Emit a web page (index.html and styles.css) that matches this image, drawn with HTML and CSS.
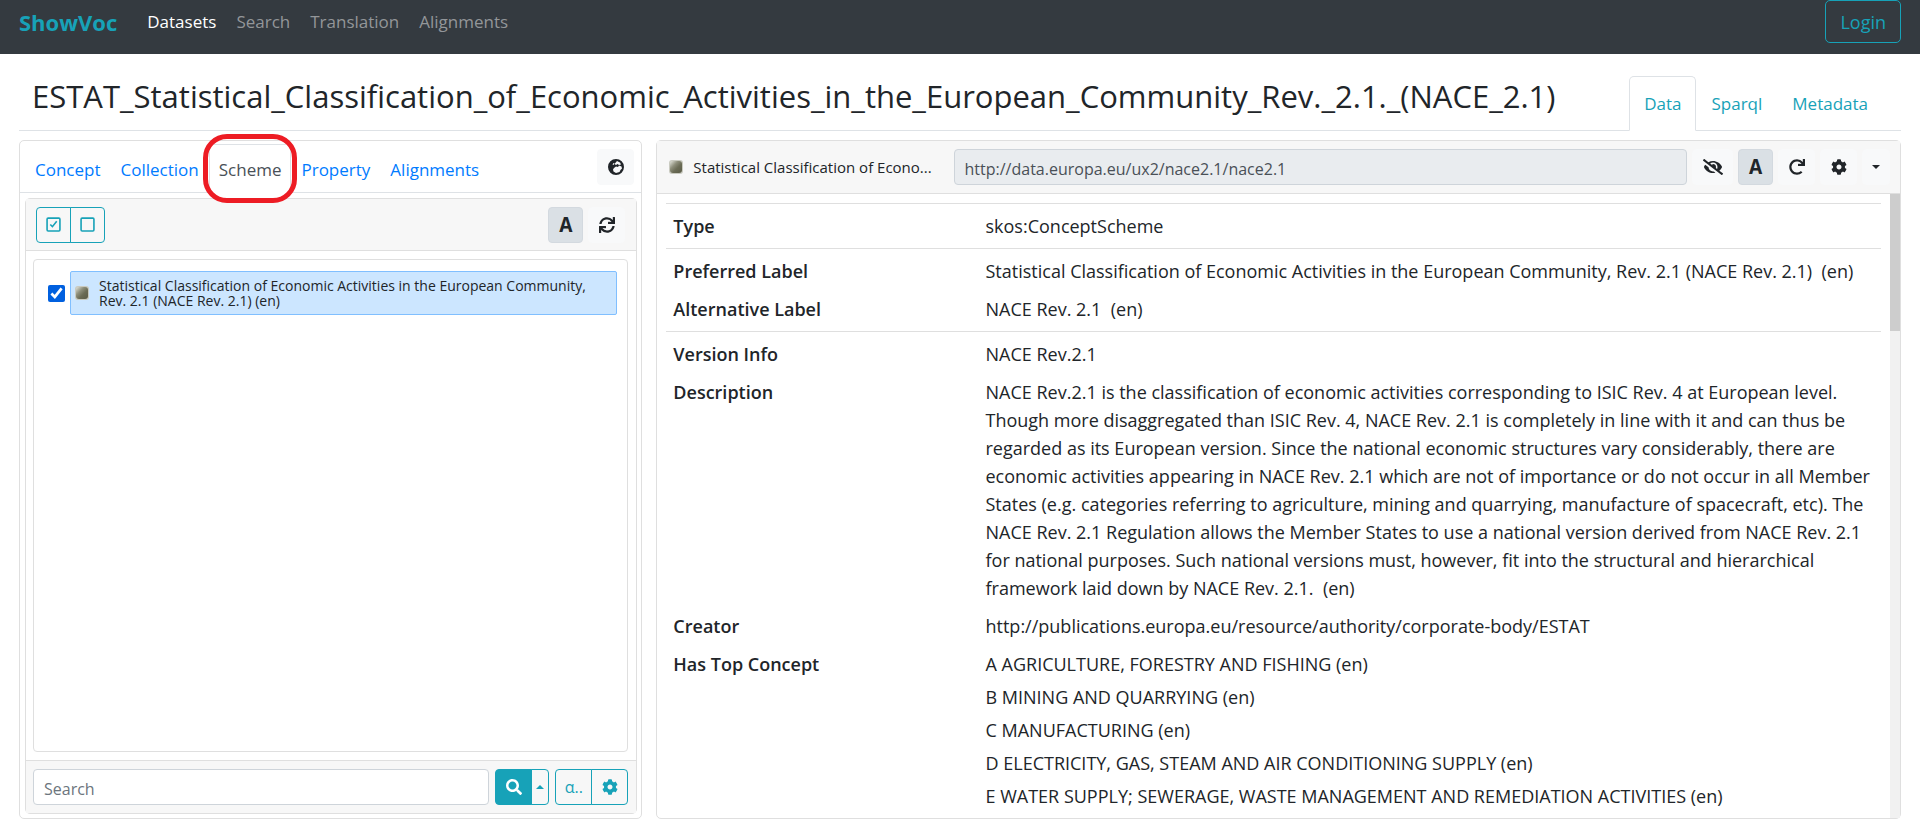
FILE: index.html
```html
<!DOCTYPE html>
<html lang="en">
  <head>
    <meta charset="UTF-8">
    <title>ShowVoc</title>
    <link rel="stylesheet" href="styles.css">
  </head>
  <body>

    <!-- Shared icons -->
    <svg class="icon-defs" aria-hidden="true">
      <linearGradient id="concept-shade" x1="0" y1="0" x2="1" y2="1">
        <stop offset="0" stop-color="#e4e5dc"/>
        <stop offset="0.35" stop-color="#8d8e7b"/>
        <stop offset="0.6" stop-color="#6b6c56"/>
        <stop offset="1" stop-color="#5a5b47"/>
      </linearGradient>
      <symbol id="icon-cog" viewBox="0 0 512 512"><path d="M487.4 315.7l-42.6-24.6c4.3-23.2 4.3-47 0-70.2l42.6-24.6c4.9-2.8 7.1-8.6 5.5-14-11.1-35.6-30-67.8-54.7-94.6-3.8-4.1-10-5.1-14.8-2.3L380.8 110c-17.9-15.4-38.5-27.3-60.8-35.1V25.8c0-5.6-3.9-10.5-9.4-11.7-36.7-8.2-74.3-7.8-109.2 0-5.5 1.2-9.4 6.1-9.4 11.7V75c-22.2 7.9-42.8 19.8-60.8 35.1L88.7 85.5c-4.9-2.8-11-1.9-14.8 2.3-24.7 26.7-43.6 58.9-54.7 94.6-1.7 5.4.6 11.2 5.5 14L67.3 221c-4.3 23.2-4.3 47 0 70.2l-42.6 24.6c-4.9 2.8-7.1 8.6-5.5 14 11.1 35.6 30 67.8 54.7 94.6 3.8 4.1 10 5.1 14.8 2.3l42.6-24.6c17.9 15.4 38.5 27.3 60.8 35.1v49.2c0 5.6 3.9 10.5 9.4 11.7 36.7 8.2 74.3 7.8 109.2 0 5.5-1.2 9.4-6.1 9.4-11.7v-49.2c22.2-7.9 42.8-19.8 60.8-35.1l42.6 24.6c4.9 2.8 11 1.9 14.8-2.3 24.7-26.7 43.6-58.9 54.7-94.6 1.5-5.5-.7-11.3-5.6-14.1zM256 336c-44.1 0-80-35.9-80-80s35.9-80 80-80 80 35.9 80 80-35.9 80-80 80z"/></symbol>
      <symbol id="icon-concept" viewBox="0 0 14 14"><rect width="14" height="14" rx="3" fill="#c9cac0"/><rect x="1" y="1" width="12" height="12" rx="3" fill="url(#concept-shade)"/></symbol>
    </svg>

    <nav class="navbar">
      <a href="#" class="brand">ShowVoc</a>
      <a href="#" class="nav-item active">Datasets</a>
      <a href="#" class="nav-item">Search</a>
      <a href="#" class="nav-item">Translation</a>
      <a href="#" class="nav-item">Alignments</a>
      <button class="login">Login</button>
    </nav>

    <header class="dataset-header">
      <h3>ESTAT_Statistical_Classification_of_Economic_Activities_in_the_European_Community_Rev._2.1._(NACE_2.1)</h3>
      <div class="view-tabs">
        <a href="#" class="active">Data</a>
        <a href="#">Sparql</a>
        <a href="#">Metadata</a>
      </div>
    </header>

    <main class="panels">

      <!-- Structures -->
      <section class="card structures">
        <div class="structure-tabs">
          <a href="#">Concept</a>
          <a href="#">Collection</a>
          <a href="#" class="active">Scheme</a>
          <a href="#">Property</a>
          <a href="#">Alignments</a>
          <button class="btn globe" aria-label="Languages">
            <svg class="icon" viewBox="0 0 16 16"><path fill-rule="evenodd" d="M8 0a8 8 0 1 0 0 16A8 8 0 0 0 8 0zM9 2l3 1.500 1 2-2 .5-1.500-1L8 6 6.500 5zM5.500 4l1 .5-1 1.500-1-.5zM6 9l2-1.500 2 .5 1-1.500 2.500 1 .5 2-1.500 1.500-1 2L8 14l-2.500-1.500L5 10.500z"/></svg>
          </button>
        </div>

        <div class="card scheme-panel">
          <div class="card-header">
            <div class="btn-group">
              <button class="btn outline" aria-label="Check all">
                <svg class="icon-box" viewBox="0 0 14 14"><rect x="1" y="1" width="12" height="12" rx="1"/><path d="M4 7l2 2 4-5"/></svg>
              </button>
              <button class="btn outline" aria-label="Uncheck all">
                <svg class="icon-box" viewBox="0 0 14 14"><rect x="1" y="1" width="12" height="12" rx="1"/></svg>
              </button>
            </div>
            <div class="tools">
              <button class="btn pressed">A</button>
              <button class="btn" aria-label="Refresh">
                <svg class="icon" viewBox="0 0 512 512"><path d="M440.65 12.57l4 82.77A247.16 247.16 0 0 0 255.83 8C134.73 8 33.91 94.92 12.29 209.82A12 12 0 0 0 24.09 224h49.05a12 12 0 0 0 11.67-9.26 175.91 175.91 0 0 1 317-56.94l-101.46-4.86a12 12 0 0 0-12.57 12v47.41a12 12 0 0 0 12 12H500a12 12 0 0 0 12-12V12a12 12 0 0 0-12-12h-47.37a12 12 0 0 0-11.98 12.57zM255.83 432a175.61 175.61 0 0 1-146-77.8l101.8 4.87a12 12 0 0 0 12.57-12v-47.4a12 12 0 0 0-12-12H12a12 12 0 0 0-12 12V500a12 12 0 0 0 12 12h47.35a12 12 0 0 0 12-12.6l-4.15-82.57A247.17 247.17 0 0 0 255.83 504c121.11 0 221.93-86.92 243.55-201.82a12 12 0 0 0-11.8-14.18h-49.05a12 12 0 0 0-11.67 9.26A175.86 175.86 0 0 1 255.83 432z"/></svg>
              </button>
            </div>
          </div>

          <div class="scheme-list">
            <div class="scheme-node">
              <input type="checkbox" id="scheme-nace" checked>
              <label for="scheme-nace">
                <svg class="concept-icon"><use href="#icon-concept"/></svg>
                <span>Statistical Classification of Economic Activities in the European Community, Rev. 2.1 (NACE Rev. 2.1) (en)</span>
              </label>
            </div>
          </div>

          <div class="card-footer">
            <input type="text" class="search-input" placeholder="Search" aria-label="Search">
            <div class="btn-group">
              <button class="btn outline filled" aria-label="Run search">
                <svg class="icon" viewBox="0 0 512 512"><path d="M505 442.7L405.3 343c-4.5-4.5-10.6-7-17-7H372c27.6-35.3 44-79.7 44-128C416 93.1 322.9 0 208 0S0 93.1 0 208s93.1 208 208 208c48.3 0 92.7-16.4 128-44v16.3c0 6.4 2.5 12.5 7 17l99.7 99.7c9.4 9.4 24.6 9.4 33.9 0l28.3-28.3c9.4-9.4 9.4-24.6.1-34zM208 336c-70.7 0-128-57.2-128-128 0-70.7 57.2-128 128-128 70.7 0 128 57.2 128 128 0 70.7-57.2 128-128 128z"/></svg>
              </button>
              <button class="btn outline narrow" aria-label="Search options"><span class="caret up"></span></button>
            </div>
            <div class="btn-group">
              <button class="btn outline">α..</button>
              <button class="btn outline" aria-label="Search settings"><svg class="icon"><use href="#icon-cog"/></svg></button>
            </div>
          </div>
        </div>
      </section>

      <!-- Resource view -->
      <section class="card resource">
        <div class="card-header">
          <div class="resource-name">
            <svg class="concept-icon"><use href="#icon-concept"/></svg>
            <span>Statistical Classification of Econo...</span>
          </div>
          <input type="text" class="resource-uri" value="http://data.europa.eu/ux2/nace2.1/nace2.1" aria-label="Resource URI" readonly>
          <div class="tools">
            <button class="btn wide" aria-label="Hide inferred">
              <svg class="icon-eye" viewBox="0 0 640 512"><path d="M320 400c-75.85 0-137.25-58.71-142.9-133.11L72.2 185.82c-13.79 17.3-26.48 35.59-36.72 55.59a32.35 32.35 0 0 0 0 29.19C89.71 376.41 197.07 448 320 448c26.91 0 52.87-4 77.89-10.46L346 397.39a144.13 144.13 0 0 1-26 2.61zm313.82 58.1l-110.55-85.44a331.25 331.25 0 0 0 81.25-102.07 32.35 32.35 0 0 0 0-29.19C550.29 135.59 442.93 64 320 64a308.15 308.15 0 0 0-147.32 37.7L45.46 3.37A16 16 0 0 0 23 6.18L3.37 31.45A16 16 0 0 0 6.18 53.9l588.36 454.73a16 16 0 0 0 22.46-2.81l19.64-25.27a16 16 0 0 0-2.82-22.45zm-183.72-142l-39.3-30.38A94.75 94.75 0 0 0 416 256a94.76 94.76 0 0 0-121.31-92.21A47.65 47.65 0 0 1 304 192a46.64 46.64 0 0 1-1.54 10l-73.61-56.89A142.31 142.31 0 0 1 320 112a143.92 143.92 0 0 1 144 144c0 21.63-5.29 41.79-13.9 60.11z"/></svg>
            </button>
            <button class="btn pressed">A</button>
            <button class="btn" aria-label="Reload">
              <svg class="icon" viewBox="0 0 512 512"><path d="M500.33 0h-47.41a12 12 0 0 0-12 12.57l4 82.76A247.42 247.42 0 0 0 256 8C119.34 8 7.9 119.53 8 256.19 8.1 393.07 119.1 504 256 504a247.1 247.1 0 0 0 166.18-63.91 12 12 0 0 0 .48-17.43l-34-34a12 12 0 0 0-16.38-.55A176 176 0 1 1 402.1 157.8l-101.53-4.87a12 12 0 0 0-12.57 12v47.41a12 12 0 0 0 12 12h200.33a12 12 0 0 0 12-12V12a12 12 0 0 0-12-12z"/></svg>
            </button>
            <button class="btn" aria-label="Settings"><svg class="icon"><use href="#icon-cog"/></svg></button>
            <button class="btn menu" aria-label="More"><span class="caret"></span></button>
          </div>
        </div>

        <div class="resource-body">
          <div class="properties">
            <dl>
              <div class="row"><dt>Type</dt><dd>skos:ConceptScheme</dd></div>
            </dl>
            <dl>
              <div class="row"><dt>Preferred Label</dt><dd>Statistical Classification of Economic Activities in the European Community, Rev. 2.1 (NACE Rev. 2.1)&nbsp; (en)</dd></div>
              <div class="row"><dt>Alternative Label</dt><dd>NACE Rev. 2.1&nbsp; (en)</dd></div>
            </dl>
            <dl>
              <div class="row"><dt>Version Info</dt><dd>NACE Rev.2.1</dd></div>
              <div class="row">
                <dt>Description</dt>
                <dd>NACE Rev.2.1 is the classification of economic activities corresponding to ISIC Rev. 4 at European level. Though more disaggregated than ISIC Rev. 4, NACE Rev. 2.1 is completely in line with it and can thus be regarded as its European version. Since the national economic structures vary considerably, there are economic activities appearing in NACE Rev. 2.1 which are not of importance or do not occur in all Member States (e.g. categories referring to agriculture, mining and quarrying, manufacture of spacecraft, etc). The NACE Rev. 2.1 Regulation allows the Member States to use a national version derived from NACE Rev. 2.1 for national purposes. Such national versions must, however, fit into the structural and hierarchical framework laid down by NACE Rev. 2.1.&nbsp; (en)</dd>
              </div>
              <div class="row"><dt>Creator</dt><dd>http://publications.europa.eu/resource/authority/corporate-body/ESTAT</dd></div>
              <div class="row">
                <dt>Has Top Concept</dt>
                <dd>A AGRICULTURE, FORESTRY AND FISHING (en)</dd>
                <dd>B MINING AND QUARRYING (en)</dd>
                <dd>C MANUFACTURING (en)</dd>
                <dd>D ELECTRICITY, GAS, STEAM AND AIR CONDITIONING SUPPLY (en)</dd>
                <dd>E WATER SUPPLY; SEWERAGE, WASTE MANAGEMENT AND REMEDIATION ACTIVITIES (en)</dd>
              </div>
            </dl>
          </div>
          <div class="scrollbar"><div class="thumb"></div></div>
        </div>
      </section>

    </main>
  </body>
</html>
```
FILE: styles.css
```css
* {
  box-sizing: border-box;
}
body {
  font-family: "Segoe UI", "Open Sans", sans-serif;
  font-size: 18px;
  line-height: 28px;
  color: #212529;
  background-color: #fff;
  margin: 0;
  height: 100vh;
  display: flex;
  flex-direction: column;
  overflow: hidden;
}
a {
  text-decoration: none;
}
button,
input {
  font-family: inherit;
}
.icon-defs {
  width: 0;
  height: 0;
}

/* Navbar */
.navbar {
  display: flex;
  align-items: center;
  gap: 20px;
  height: 54px;
  padding: 0 19px 11px;
  background-color: #343a40;
}
.brand {
  color: #17a2b8;
  font-size: 22px;
  font-weight: bold;
  margin-right: 10px;
}
.nav-item {
  font-size: 17px;
  color: #939699;
}
.nav-item.active {
  color: #fff;
}
.login {
  margin-left: auto;
  height: 43px;
  padding: 0 14px;
  font-size: 18px;
  color: #17a2b8;
  background: none;
  border: 1px solid #17a2b8;
  border-radius: 5px;
}

/* Dataset title and view tabs */
.dataset-header {
  display: flex;
  justify-content: space-between;
  align-items: flex-end;
  height: 77px;
  margin: 0 19px;
  padding: 0 18px 0 13px;
  border-bottom: 1px solid #dee2e6;
}
.dataset-header h3 {
  margin: 0 0 14px;
  font-size: 31px;
  font-weight: normal;
  line-height: 40px;
  white-space: nowrap;
}
.view-tabs {
  display: flex;
  margin-bottom: -1px;
}
.view-tabs a {
  padding: 13px 14px 12px;
  font-size: 17px;
  color: #17a2b8;
  border: 1px solid transparent;
  border-radius: 5px 5px 0 0;
}
.view-tabs .active {
  background-color: #fff;
  border-color: #dee2e6 #dee2e6 #fff;
}

/* Panels */
.panels {
  flex: 1;
  min-height: 0;
  display: flex;
  gap: 14px;
  padding: 9px 19px 4px;
}
.card {
  display: flex;
  flex-direction: column;
  border: 1px solid #dfdfdf;
  border-radius: 5px;
}
.card-header,
.card-footer {
  display: flex;
  align-items: center;
  gap: 5px;
  background-color: #f7f7f7;
}
.card-header {
  border-bottom: 1px solid #dfdfdf;
}
.card-footer {
  height: 53px;
  gap: 6px;
  padding: 0 8px 0 7px;
  border-top: 1px solid #dfdfdf;
}
.structures {
  flex: 1;
}
.resource {
  flex: 2;
  min-width: 0;
}

/* Buttons */
.btn {
  display: flex;
  align-items: center;
  justify-content: center;
  width: 37px;
  height: 36px;
  padding: 0;
  font-size: 16px;
  color: #212529;
  background-color: #f8f9fa;
  border: 1px solid #f8f9fa;
  border-radius: 4px;
}
.btn.wide {
  width: 41px;
}
.btn.menu {
  width: 28px;
}
.btn.pressed {
  width: 35px;
  padding-top: 3px;
  font-family: "Liberation Mono", monospace;
  font-size: 22px;
  font-weight: bold;
  background-color: #dae0e5;
  border-color: #d3d9df;
}
.btn.outline {
  color: #17a2b8;
  background: none;
  border-color: #17a2b8;
}
.btn.filled {
  color: #fff;
  background-color: #17a2b8;
}
.btn.narrow {
  width: 18px;
}
.btn-group {
  display: flex;
}
.btn-group .btn + .btn {
  margin-left: -1px;
  border-radius: 0 4px 4px 0;
}
.btn-group .btn:first-child {
  border-radius: 4px 0 0 4px;
}
.tools {
  display: flex;
  gap: 5px;
  margin-left: auto;
}
.icon {
  width: 16px;
  height: 16px;
  fill: currentColor;
}
.icon-eye {
  width: 20px;
  height: 16px;
  fill: currentColor;
}
.icon-box {
  width: 15px;
  height: 15px;
  fill: none;
  stroke: currentColor;
  stroke-width: 1.5;
}
.concept-icon {
  flex: none;
  width: 14px;
  height: 14px;
}
.caret {
  border: 4px solid transparent;
  border-top-color: currentColor;
  border-bottom: 0;
}
.caret.up {
  border-top: 0;
  border-bottom: 4px solid currentColor;
}

/* Structure tabs */
.structure-tabs {
  display: flex;
  align-items: flex-end;
  height: 52px;
  padding: 0 7px 0 5px;
  border-bottom: 1px solid #dee2e6;
}
.structure-tabs a {
  margin-bottom: -1px;
  padding: 11px 9px 8px;
  font-size: 17px;
  color: #007bff;
  border: 1px solid transparent;
}
.structure-tabs .active {
  position: relative;
  color: #495057;
  background-color: #fff;
  border-color: #dee2e6 #dee2e6 #fff;
}
/* Highlight ring over the current tab */
.structure-tabs .active::after {
  content: "";
  position: absolute;
  inset: -11px -7px;
  border: 5px solid #ed1c24;
  border-radius: 24px;
}
.globe {
  margin: 0 0 7px auto;
}

/* Scheme list */
.scheme-panel {
  flex: 1;
  margin: 5px 4px 4px 5px;
}
.scheme-panel .card-header {
  height: 52px;
  padding: 0 11px 0 10px;
}
.scheme-panel .card-header .btn-group .btn {
  width: 35px;
}
.scheme-list {
  flex: 1;
  margin: 8px 8px 8px 7px;
  padding: 11px 10px 11px 14px;
  border: 1px solid #dfdfdf;
  border-radius: 4px;
}
.scheme-node {
  display: flex;
  align-items: center;
  gap: 5px;
}
.scheme-node input {
  width: 17px;
  height: 17px;
  margin: 0;
  accent-color: #0060df;
}
.scheme-node label {
  flex: 1;
  display: flex;
  align-items: center;
  gap: 10px;
  padding: 6px 4px;
  font-size: 14px;
  line-height: 15px;
  background-color: #cce6ff;
  border: 1px solid #80bfff;
  border-radius: 2px;
}
.search-input,
.resource-uri {
  flex: 1;
  min-width: 0;
  height: 36px;
  padding: 3px 10px 0;
  font-size: 16px;
  border: 1px solid #ced4da;
  border-radius: 4px;
}
.search-input::placeholder {
  color: #6c757d;
}

/* Resource view */
.resource .card-header {
  height: 53px;
  padding: 0 10px;
}
.resource-name {
  display: flex;
  align-items: center;
  gap: 10px;
  width: 23%;
  padding: 0 0 0 2px;
  font-size: 15px;
  white-space: nowrap;
}
.resource-uri {
  color: #495057;
  background-color: #e9ecef;
}
.resource-body {
  flex: 1;
  min-height: 0;
  display: flex;
}
.properties {
  flex: 1;
  padding: 9px 9px 0;
  overflow: hidden;
}
.properties dl {
  margin: 0;
  padding: 3px 7px;
  border-top: 1px solid #dfdfdf;
}
.row {
  display: grid;
  grid-template-columns: 26% 1fr;
  row-gap: 5px;
  padding: 5px 0;
}
.row dt {
  font-weight: 600;
}
.row dd {
  grid-column: 2;
  margin: 0;
}
.scrollbar {
  width: 10px;
  background-color: #f1f1f1;
}
.thumb {
  height: 22%;
  background-color: #cdcdcd;
}
```
